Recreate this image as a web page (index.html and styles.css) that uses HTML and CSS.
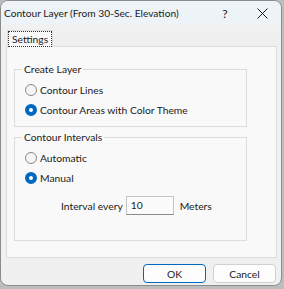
FILE: index.html
```html
<!DOCTYPE html>
<html>
<head>
<title>Contour Layer</title>
<link rel="stylesheet" href="styles.css">
</head>
<body>
  <div class="window">
    <div class="titlebar">
      <span class="title">Contour Layer (From 30-Sec. Elevation)</span>
      <span class="help">?</span>
      <span class="close">
        <svg width="11" height="11" viewBox="0 0 11 11"><path d="M0.5 0.5 L10.5 10.5 M10.5 0.5 L0.5 10.5" stroke="#1a1a1a" stroke-width="1"/></svg>
      </span>
    </div>
    <div class="tabs">
      <div class="tab"><span class="tab-focus">Settings</span></div>
    </div>
    <div class="panel">
      <fieldset class="group group-layer">
        <legend>Create Layer</legend>
        <label class="radio"><span class="dot"></span>Contour Lines</label>
        <label class="radio"><span class="dot checked"></span>Contour Areas with Color Theme</label>
      </fieldset>
      <fieldset class="group group-intervals">
        <legend>Contour Intervals</legend>
        <label class="radio"><span class="dot"></span>Automatic</label>
        <label class="radio"><span class="dot checked"></span>Manual</label>
        <div class="interval">
          <span>Interval every</span>
          <span class="field">10</span>
          <span>Meters</span>
        </div>
      </fieldset>
    </div>
    <div class="buttons">
      <button class="btn default">OK</button>
      <button class="btn">Cancel</button>
    </div>
  </div>
</body>
</html>
```

FILE: styles.css
```css
body {
margin: 0;
background-color: #bdbdbd;
font-family: Lato, "Noto Sans", sans-serif;
font-size: 10.3px;
color: #1a1a1a;
}

.window {
width: 282px;
height: 286px;
box-sizing: border-box;
border: 1px solid #8c8c8c;
border-radius: 8px;
background-color: #f0f0f0;
overflow: hidden;
}

.titlebar {
height: 24px;
display: flex;
align-items: center;
background-color: #eef3f8;
white-space: nowrap;
font-size: 10.2px;
}

.title {
padding-left: 3px;
flex: 1;
}

.help {
width: 16px;
margin-right: 24px;
font-size: 12px;
text-align: center;
}

.close {
width: 11px;
margin-right: 13px;
display: flex;
}

.tabs {
display: flex;
padding-left: 6px;
margin-top: 5px;
}

.tab {
height: 16px;
padding: 0 1px;
border: 1px solid #dcdcdc;
border-bottom: none;
background-color: #f9f9f9;
display: flex;
align-items: center;
margin-bottom: -1px;
position: relative;
}

.tab-focus {
padding: 0 3px;
line-height: 14px;
outline: 1px dotted #333;
}

.panel {
margin-left: 5px;
width: 271px;
height: 212px;
box-sizing: border-box;
border: 1px solid #dcdcdc;
background-color: #f9f9f9;
padding-top: 14px;
}

.group {
margin: 0 0 0 7px;
width: 233px;
box-sizing: border-box;
border: 1px solid #dcdcdc;
padding: 3px 0 6px 10px;
}

.group legend {
padding: 0 2px;
margin-left: -3px;
line-height: 16px;
}

.group-intervals {
margin-top: 2px;
padding-bottom: 25px;
}

.radio {
display: flex;
align-items: center;
height: 20px;
white-space: nowrap;
}

.dot {
width: 10px;
height: 10px;
border: 1px solid #8a8a8a;
border-radius: 50%;
background-color: #f5f5f5;
margin-right: 3px;
box-sizing: content-box;
}

.dot.checked {
width: 4px;
height: 4px;
border: 4px solid #0067c0;
background-color: #ffffff;
}

.interval {
display: flex;
align-items: center;
margin-top: 8px;
padding-left: 36px;
height: 19px;
}

.field {
width: 48px;
height: 19px;
box-sizing: border-box;
margin: 0 6px 0 3px;
padding-left: 4px;
border: 1px solid #c4c4c4;
border-bottom-color: #8a8a8a;
background-color: #fbfbfb;
line-height: 17px;
}

.buttons {
display: flex;
justify-content: flex-end;
gap: 7px;
padding: 6px 5px 0 0;
}

.btn {
width: 63px;
height: 19px;
box-sizing: border-box;
border: 1px solid #d0d0d0;
border-radius: 4px;
background-color: #fdfdfd;
font-family: Lato, "Noto Sans", sans-serif;
font-size: 10.3px;
color: #1a1a1a;
padding: 0;
}

.btn.default {
border-color: #0067c0;
}
```
